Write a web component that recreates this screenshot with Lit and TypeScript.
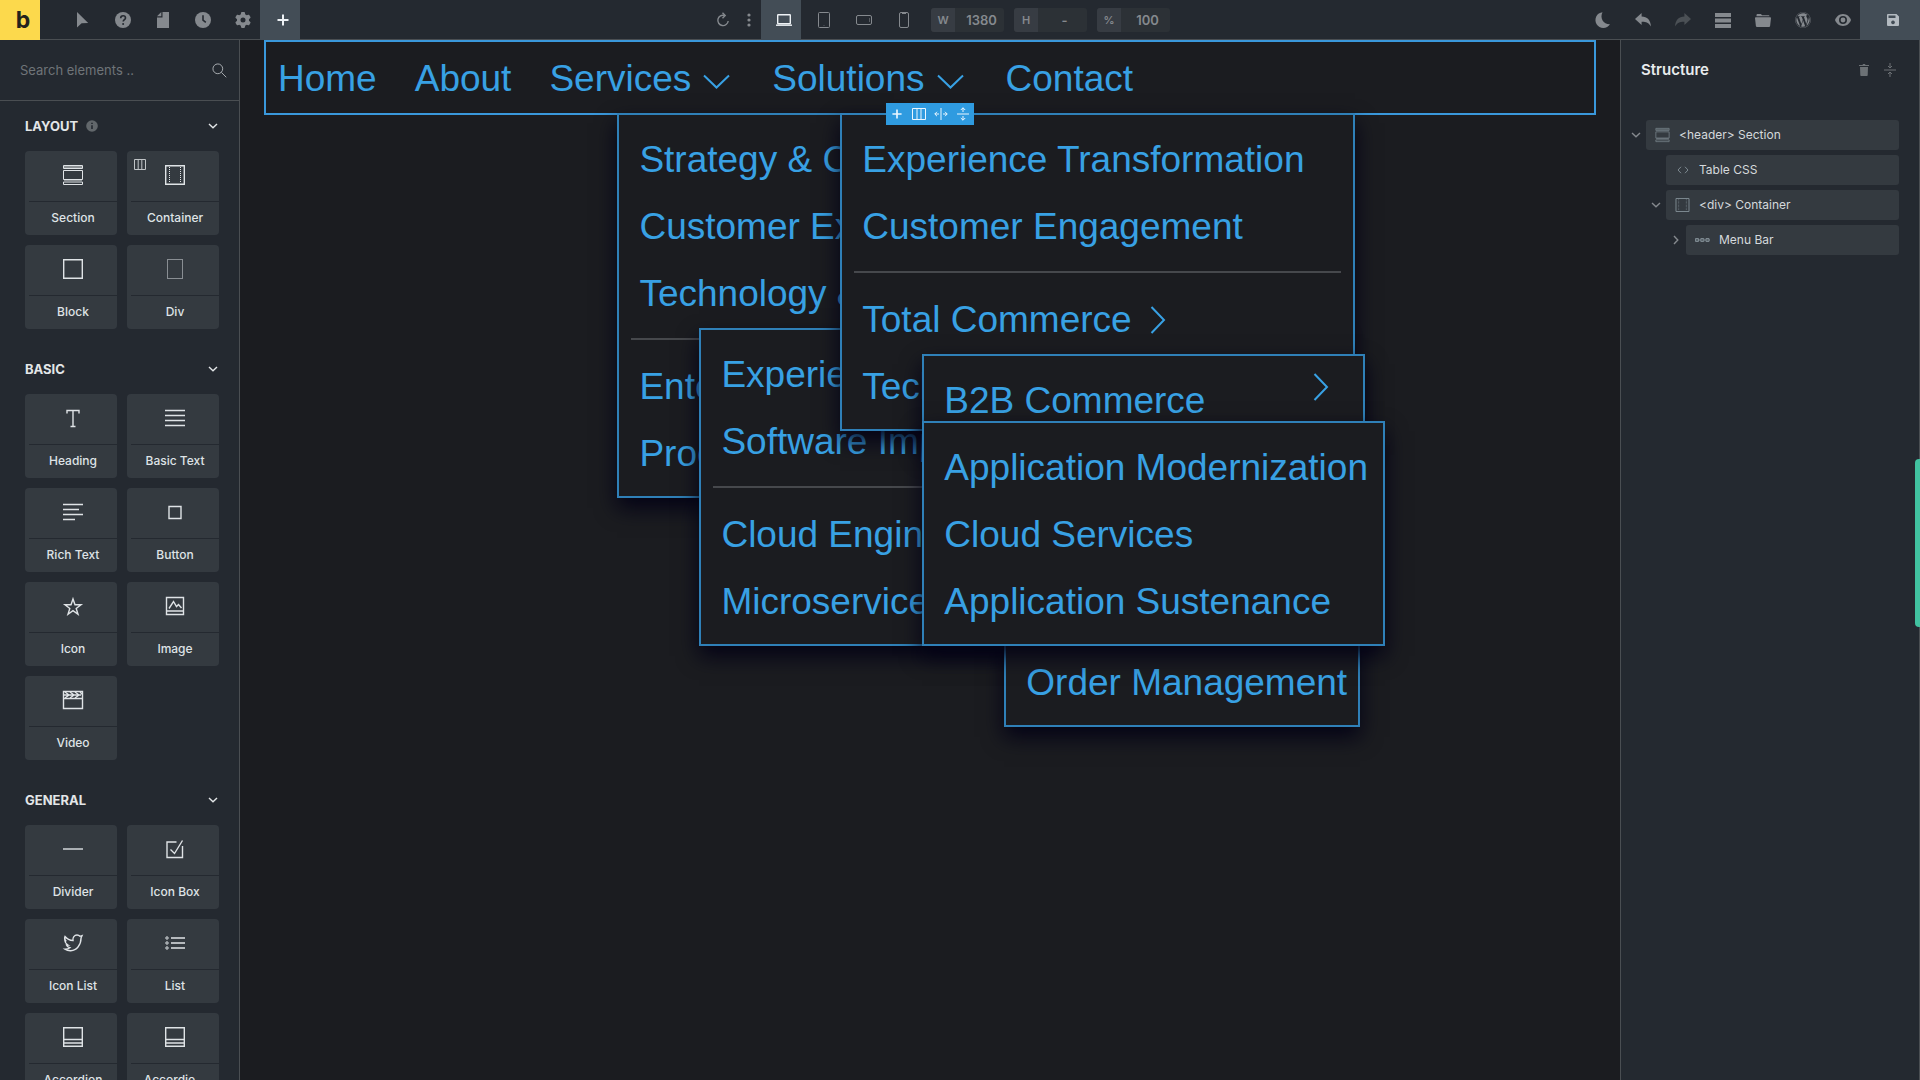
import { LitElement, html, svg, css, nothing } from "lit";
import { customElement, property } from "lit/decorators.js";
import { classMap } from "lit/directives/class-map.js";

/* Every glyph is drawn on its own viewBox: [viewBox, shapes]. */
const ICONS: Record<string, [string, any]> = {
  cursor: ["0 0 16 16", svg`<path class="f" d="M2 0v15.500l4.600-4.300 6.600-.2z"/>`],
  help: ["0 0 16 16", svg`<circle class="f" cx="8" cy="8" r="8"/><path class="cut" d="M5.700 6.200c0-1.500 1-2.400 2.400-2.400s2.400.9 2.400 2.100c0 1.700-2.300 1.800-2.300 3.600"/><circle class="cutf" cx="8.100" cy="11.900" r="1"/>`],
  page: ["0 0 16 16", svg`<path class="f" d="M7.500 0H14v16H2V5.500h5.500z"/><path class="f" d="M6.300 0v4.300H2z"/>`],
  clock: ["0 0 16 16", svg`<circle class="f" cx="8" cy="8" r="8"/><path class="cut" d="M8 3.200V8.200l2.800 2.200"/>`],
  gear: ["0 0 512 512", svg`<path class="f" d="M495.900 166.600c3.200 8.700.5 18.400-6.400 24.600l-43.300 39.400c1.100 8.300 1.700 16.800 1.700 25.400s-.6 17.100-1.700 25.400l43.300 39.400c6.900 6.200 9.600 15.900 6.400 24.600-4.400 11.900-9.700 23.300-15.800 34.300l-4.700 8.100c-6.600 11-14 21.400-22.100 31.200-5.900 7.200-15.700 9.600-24.500 6.800l-55.700-17.700c-13.400 10.300-28.200 18.900-44 25.400l-12.500 57.100c-2 9.100-9 16.300-18.200 17.800-13.800 2.300-28 3.500-42.500 3.500s-28.700-1.200-42.500-3.500c-9.200-1.500-16.200-8.700-18.200-17.800l-12.500-57.100c-15.800-6.500-30.600-15.100-44-25.400l-55.700 17.700c-8.800 2.800-18.600.3-24.500-6.800-8.100-9.800-15.500-20.200-22.100-31.200l-4.700-8.100c-6.100-11-11.400-22.400-15.800-34.300-3.200-8.700-.5-18.400 6.400-24.600l43.300-39.400c-1.100-8.300-1.700-16.800-1.700-25.400s.6-17.100 1.700-25.400L22.300 191.200c-6.900-6.200-9.600-15.900-6.400-24.600 4.400-11.900 9.700-23.300 15.800-34.300l4.700-8.100c6.600-11 14-21.400 22.100-31.200 5.900-7.200 15.700-9.600 24.500-6.800l55.700 17.700c13.400-10.300 28.200-18.900 44-25.400l12.500-57.100c2-9.100 9-16.300 18.200-17.800C227.200 1.200 241.500 0 256 0s28.700 1.200 42.500 3.500c9.200 1.500 16.200 8.700 18.200 17.800l12.500 57.100c15.800 6.500 30.600 15.100 44 25.400l55.700-17.700c8.800-2.800 18.600-.3 24.500 6.800 8.100 9.800 15.500 20.200 22.100 31.200l4.700 8.100c6.100 11 11.400 22.400 15.700 34.400zM256 336a80 80 0 1 0 0-160 80 80 0 1 0 0 160z"/>`],
  plus: ["0 0 12 12", svg`<path class="s2" d="M6 0.500v11M0.500 6h11"/>`],
  refresh: ["0 0 14 16", svg`<path class="s15" d="M8.500 3.400A5.200 5.200 0 1 0 12.200 9"/><path class="s15" d="M6.500 0.700l2.700 2.800-2.700 2.700"/>`],
  dots: ["0 0 4 14", svg`<circle class="f" cx="2" cy="2" r="1.600"/><circle class="f" cx="2" cy="7" r="1.600"/><circle class="f" cx="2" cy="12" r="1.600"/>`],
  laptop: ["0 0 16 12", svg`<rect class="s15" x="1.700" y="0.700" width="12.600" height="9" rx="0.500"/><path class="s15" d="M0 11.200h16"/>`],
  tablet: ["0 0 12 16", svg`<rect class="s1" x="0.500" y="0.500" width="11" height="15" rx="1"/><path class="s1" d="M5.500 13.500h1" opacity="0.500"/>`],
  landscape: ["0 0 16 10", svg`<rect class="s1" x="0.500" y="0.500" width="15" height="9" rx="1.500"/><path class="s1" d="M13.500 3v4" opacity="0.500"/>`],
  mobile: ["0 0 10 16", svg`<rect class="s1" x="0.500" y="0.500" width="9" height="15" rx="1.500"/><path class="s1" d="M3 1.500h4"/>`],
  moon: ["0 0 16 16", svg`<path class="f" d="M7.500 0.200A7.900 7.900 0 1 0 15 12.300 C8.500 12.500 4.500 6 7.500 0.200z"/>`],
  undo: ["0 0 16 14", svg`<path class="f" d="M6.600 0v3.500C12.300 3.500 15.500 7 16 13.500 13.500 9.500 11 8.600 6.600 8.700V12L0 6z"/>`],
  redo: ["0 0 16 14", svg`<path class="f" d="M9.400 0v3.500C3.700 3.500.5 7 0 13.500 2.500 9.500 5 8.600 9.400 8.700V12L16 6z"/>`],
  rows: ["0 0 16 15", svg`<path class="f" d="M0 0h16v4H0zM0 5.500h16v4H0zM0 11h16v4H0z"/>`],
  folder: ["0 0 16 13", svg`<path class="f" d="M1.500 2.300V1.200C1.500.5 2 0 2.600 0h3.200l1.400 1.300h6.200c.7 0 1.100.5 1.100 1zM.8 3.200h14.400c.5 0 .8.400.8.900l-.9 7.900c-.1.600-.5 1-1.100 1H2c-.6 0-1-.4-1.100-1L0 4.100c0-.5.300-.9.800-.9z"/>`],
  wp: ["0 0 512 512", svg`<path class="f" d="M61.700 169.400l101.500 278C92.200 413 43.300 340.200 43.300 256c0-30.900 6.600-60.100 18.400-86.600zm337.900 75.900c0-26.300-9.400-44.500-17.500-58.700-10.800-17.500-20.900-32.400-20.900-49.900 0-19.600 14.800-37.800 35.700-37.800.9 0 1.800.1 2.800.2-37.900-34.700-88.300-55.900-143.700-55.900-74.300 0-139.700 38.100-177.800 95.900 5 .2 9.700.3 13.700.3 22.200 0 56.700-2.700 56.700-2.700 11.500-.7 12.800 16.200 1.400 17.500 0 0-11.500 1.300-24.300 2l77.500 230.400L249.800 247l-33.100-90.800c-11.500-.7-22.300-2-22.300-2-11.500-.7-10.100-18.200 1.300-17.500 0 0 35.100 2.700 56 2.700 22.200 0 56.700-2.700 56.700-2.700 11.500-.7 12.800 16.200 1.400 17.500 0 0-11.500 1.300-24.300 2l76.900 228.700 21.200-70.900c9-29.400 16-50.500 16-68.700zm-139.900 29.300l-63.800 185.500c19.100 5.600 39.200 8.700 60.100 8.700 24.800 0 48.500-4.300 70.600-12.100-.6-.9-1.100-1.900-1.500-2.900zm183-120.700c.9 6.800 1.400 14 1.400 21.900 0 21.600-4 45.800-16.200 76.200l-65 187.900C426.200 403 468.700 334.500 468.700 256c0-37-9.400-71.800-26-102.100zM504 256c0 136.800-111.300 248-248 248C119.200 504 8 392.700 8 256 8 119.200 119.200 8 256 8c136.700 0 248 111.200 248 248zm-11.400 0c0-130.500-106.200-236.600-236.600-236.600C125.500 19.400 19.400 125.500 19.400 256S125.500 492.600 256 492.600c130.500 0 236.600-106.100 236.600-236.600z"/>`],
  eye: ["0 0 16 12", svg`<path class="f" d="M8 0C4 0 1.200 2.800 0 6c1.200 3.200 4 6 8 6s6.800-2.800 8-6C14.800 2.800 12 0 8 0z"/><circle class="cut" cx="8" cy="6" r="3.200"/>`],
  save: ["0 0 12 12", svg`<path class="f" fill-rule="evenodd" d="M1 0h8.500L12 2.500V11a1 1 0 0 1-1 1H1a1 1 0 0 1-1-1V1a1 1 0 0 1 1-1zM1.500 1.500V4h7V1.500zM6 6.500a1.900 1.900 0 1 0 .01 0z"/>`],
  search: ["0 0 16 16", svg`<circle class="s1" cx="6.200" cy="6.200" r="5.200"/><path class="s1" d="M10 10l5.200 5.200"/>`],
  down: ["0 0 10 6", svg`<path class="s15" d="M1 1l4 3.800L9 1"/>`],
  right: ["0 0 6 10", svg`<path class="s15" d="M1 1l3.800 4L1 9"/>`],
  info: ["0 0 12 12", svg`<circle class="f" cx="6" cy="6" r="5.800"/><path class="cut" d="M6 5.200V9M6 2.800v1.200"/>`],
  columns: ["0 0 12 11", svg`<path class="s1" d="M.5.5h11v10H.5zM4.200.5v10M7.800.5v10"/>`],
  section: ["0 0 20 20", svg`<path class="s1" d="M.5.500h19v3H.5zM.5 5.500h19v9H.5zM.5 17h19v2.500H.5z"/><path class="dim" d="M1 1h18v2H1zM1 14h18v2H1z"/>`],
  container: ["0 0 20 20", svg`<path class="s15" d="M.7.7h18.600v18.600H.7z"/><path class="s1 dot" d="M4.500 2v16M15.500 2v16"/>`],
  block: ["0 0 20 20", svg`<path class="s15" d="M.7.7h18.600v18.600H.7z"/>`],
  div: ["0 0 20 20", svg`<path class="s1 dot" d="M2.500 .5h15v19h-15z"/>`],
  heading: ["0 0 20 20", svg`<path class="s15" d="M4 5.500V2.500h12v3M10 2.500v16M7.500 18.500h5"/>`],
  text: ["0 0 20 20", svg`<path class="s15" d="M0 2.500h20M0 7.500h20M0 12.500h20M0 17.500h20"/>`],
  rich: ["0 0 20 20", svg`<path class="s15" d="M0 2.500h20M0 7.500h16M0 12.500h20M0 17.500h12"/>`],
  button: ["0 0 20 20", svg`<path class="s15" d="M4 4.500h12v12H4z"/>`],
  star: ["0 0 20 20", svg`<path class="s15" d="M10 3l2 5.800h6l-4.800 3.600 1.800 5.900-5-3.600-5 3.600 1.800-5.900L2 8.800h6z"/>`],
  image: ["0 0 20 20", svg`<path class="s15" d="M1.500 1.500h17v17h-17zM1.500 15h17"/><path class="s15" d="M4 12.500l4.500-7 3 5 2-2 3 3.500"/>`],
  video: ["0 0 20 20", svg`<path class="s15" d="M.5 1.500h19v17H.5zM.5 8.500h19"/><path class="s15" d="M2 2l4 3-4 3M7 2l4 3-4 3M12 2l4 3-4 3M17 2l2.500 2.500M1 5h17"/>`],
  divider: ["0 0 20 20", svg`<path class="s15" d="M0 10h20"/>`],
  iconbox: ["0 0 20 20", svg`<path class="s15" d="M11.500 3h-9.500v15.500h15.500V7M5.500 10.500l4 4 8-13"/>`],
  bird: ["0 0 20 20", svg`<path class="s15" d="M2 3.500c2 2.500 4.800 3.900 8 4C9.400 4.500 11.500 2 14 2c1.400 0 2.300.5 3 1.300l2-.6-.9 2c-.2 7.800-4.600 12.800-10.300 13-2.400.1-4.300-.5-5.800-1.500 2 0 3.600-.5 4.800-1.500-1.800-.3-2.800-1.300-3.300-2.700h1.400C3.200 11 2 9.500 1.900 7.800l1.300.5C1.700 7 1.300 5.200 2 3.500z"/>`],
  list: ["0 0 20 20", svg`<path class="s15" d="M6 5h14M6 10h14M6 15h14"/><circle class="s1" cx="2" cy="5" r="1.200"/><circle class="s1" cx="2" cy="10" r="1.200"/><circle class="s1" cx="2" cy="15" r="1.200"/>`],
  accordion: ["0 0 20 20", svg`<path class="s15" d="M.7.7h18.600v18.600H.7zM.7 12.500h18.600M.7 16h18.600"/>`],
  trash: ["0 0 10 12", svg`<path class="f" d="M1 3h8l-.3 8.200c0 .5-.3.800-.8.800H2.100c-.5 0-.8-.3-.8-.8zM0 1h3.500L4 0h2l.5 1H10v1H0z"/>`],
  collapse: ["0 0 12 14", svg`<path class="s1" d="M0 7h12M6 0v5M6 14V9M4 3l2 2 2-2M4 11l2-2 2 2"/>`],
  code: ["0 0 12 8", svg`<path class="s1" d="M4 .8L1 4l3 3.200M8 .8L11 4 8 7.200"/>`],
  menubar: ["0 0 15 4", svg`<path class="s1" d="M.5.5h3v3h-3zM5.800.5h3v3h-3zM11 .5h3v3h-3zM0 2h15"/>`],
  cols: ["0 0 14 12", svg`<path class="s1" d="M.5.5h13v11H.5zM5 .5v11M9 .5v11"/>`],
  spreadh: ["0 0 14 12", svg`<path class="s1" d="M7 0v12M5 6H.8M9 6h4.200M3 3.800L.8 6 3 8.200M11 3.800L13.200 6 11 8.200"/>`],
  spreadv: ["0 0 12 14", svg`<path class="s1" d="M0 7h12M6 5V.8M6 9v4.200M3.800 3L6 .8 8.200 3M3.800 11L6 13.200 8.200 11"/>`],
  navdown: ["0 0 27 16", svg`<path class="s2" d="M1 1.500l12.500 12 12.500-12"/>`],
  navright: ["0 0 16 28", svg`<path class="s2" d="M1.500 1l12.500 13-12.500 13"/>`],
};

@customElement("ui-icon")
class UiIcon extends LitElement {
  @property() name = "";
  @property({ type: Number }) w = 16;
  @property({ type: Number }) h = 16;
  static styles = css`
    :host { display: inline-flex; flex: none; }
    svg { display: block; overflow: visible; }
    .f { fill: currentColor; }
    .dim { fill: currentColor; opacity: 0.5; }
    .s1, .s15, .s2 { fill: none; stroke: currentColor; stroke-width: 1; }
    .s15 { stroke-width: 1.4; }
    .s2 { stroke-width: 2; }
    .dot { stroke-dasharray: 1 1; }
    .cut { fill: none; stroke: var(--cut, #242930); stroke-width: 1.6; }
    .cutf { fill: var(--cut, #242930); }
  `;
  render() {
    const [box, shapes] = ICONS[this.name];
    return html`<svg width=${this.w} height=${this.h} viewBox=${box} aria-hidden="true">${shapes}</svg>`;
  }
}

@customElement("top-bar")
class TopBar extends LitElement {
  static styles = css`
    :host { display: block; }
    .bar { display: flex; justify-content: space-between; height: 39px; background: #242930; border-bottom: 1px solid #4a4e52; color: #85898e; }
    .group { display: flex; align-items: flex-start; }
    button { font: inherit; color: inherit; background: none; border: 0; margin: 0; padding: 0 0 0 6px; width: 40px; height: 40px; display: flex; align-items: center; justify-content: center; box-sizing: border-box; }
    .logo { background: #fcd94c; color: #23221c; font: 700 23px/40px Inter, sans-serif; margin-right: 20px; }
    .on { background: #434d56; color: #eef2f5; }
    .off { color: #4b5055; }
    .slim { width: 25px; padding: 0; }
    .more { width: 26px; padding: 0 0 0 2px; }
    .save { width: 60px; background: #434d56; color: #b3bac0; --cut: #434d56; }
    .size { display: flex; width: 73px; height: 24px; margin: 8px 0 0 10px; border-radius: 3px; overflow: hidden; background: #2c3136; font: 600 13px/24px Inter, sans-serif; }
    .key { width: 24px; flex: none; background: #373c43; font-size: 11px; text-align: center; }
    .size input { min-width: 0; flex: 1; border: 0; padding: 0 0 0 4px; background: none; color: inherit; font: inherit; text-align: center; }
  `;
  private tool(name: string, label: string, w = 16, h = 16, cls = "") {
    return html`<button class=${cls} aria-label=${label}><ui-icon name=${name} .w=${w} .h=${h}></ui-icon></button>`;
  }
  private size(key: string, label: string, value: string) {
    return html`<label class="size"><span class="key">${key}</span><input aria-label=${label} .value=${value} /></label>`;
  }
  render() {
    return html`<div class="bar">
      <div class="group">
        <button class="logo" aria-label="Home">b</button>
        ${this.tool("cursor", "Select")}${this.tool("help", "Help")}${this.tool("page", "Pages")}
        ${this.tool("clock", "History")}${this.tool("gear", "Settings")}${this.tool("plus", "Elements", 12, 12, "on")}
      </div>
      <div class="group">
        ${this.tool("refresh", "Reload", 14, 16, "slim")}${this.tool("dots", "More", 4, 14, "more")}
        ${this.tool("laptop", "Desktop", 16, 12, "on")}${this.tool("tablet", "Tablet", 12, 16)}
        ${this.tool("landscape", "Mobile landscape", 16, 10)}${this.tool("mobile", "Mobile portrait", 10, 16)}
        ${this.size("W", "Width", "1380")}${this.size("H", "Height", "-")}${this.size("%", "Scale", "100")}
      </div>
      <div class="group">
        ${this.tool("moon", "Dark mode", 16, 16)}${this.tool("undo", "Undo", 16, 14)}${this.tool("redo", "Redo", 16, 14, "off")}
        ${this.tool("rows", "Structure", 16, 15)}${this.tool("folder", "Templates", 16, 13)}${this.tool("wp", "WordPress")}
        ${this.tool("eye", "Preview", 16, 12)}${this.tool("save", "Save", 12, 12, "save")}
      </div>
    </div>`;
  }
}

type Group = { title: string; info?: boolean; items: [string, string, boolean?][] };
const GROUPS: Group[] = [
  { title: "LAYOUT", info: true, items: [["section", "Section"], ["container", "Container", true], ["block", "Block"], ["div", "Div"]] },
  { title: "BASIC", items: [["heading", "Heading"], ["text", "Basic Text"], ["rich", "Rich Text"], ["button", "Button"], ["star", "Icon"], ["image", "Image"], ["video", "Video"]] },
  { title: "GENERAL", items: [["divider", "Divider"], ["iconbox", "Icon Box"], ["bird", "Icon List"], ["list", "List"], ["accordion", "Accordion"], ["accordion", "Accordio..."]] },
];

@customElement("element-panel")
class ElementPanel extends LitElement {
  static styles = css`
    :host { display: block; width: 239px; flex: none; overflow: hidden; background: #242930; border-right: 1px solid #4a4e52; font-family: Inter, sans-serif; color: #e3e6e8; }
    .search { display: flex; align-items: center; height: 60px; padding: 0 12px 0 20px; border-bottom: 1px solid #4a4e52; color: #aeb2b6; }
    .search input { flex: 1; min-width: 0; border: 0; padding: 0; background: none; color: inherit; font: 400 13px/20px Inter, sans-serif; }
    .search input::placeholder { color: #6f7478; opacity: 1; }
    .head { display: flex; align-items: center; width: 100%; height: 50px; padding: 0 21px 0 25px; gap: 8px; border: 0; background: none; color: inherit; font: 700 13px/20px Inter, sans-serif; }
    .head .info { color: #62676b; display: flex; }
    .head .end { margin-left: auto; }
    .grid { display: grid; grid-template-columns: 1fr 1fr; gap: 10px; padding: 0 20px 0 25px; margin-bottom: 15px; }
    .card { position: relative; display: flex; flex-direction: column; height: 84px; padding: 0 0 0 4px; border: 0; border-radius: 4px; background: #343a40; color: #dfe3e6; font: 500 12px/32px Inter, sans-serif; }
    .pic { display: flex; align-items: center; justify-content: center; width: 100%; height: 48px; padding-bottom: 2px; border-bottom: 1px solid #242930; }
    .label { width: 100%; text-align: center; }
    .badge { position: absolute; left: 7px; top: 8px; color: #c0c4c7; display: flex; }
  `;
  render() {
    return html`
      <label class="search"><input aria-label="Search elements" placeholder="Search elements .." /><ui-icon name="search" .w=${15} .h=${15}></ui-icon></label>
      ${GROUPS.map((g) => html`<section>
        <button class="head">${g.title}${g.info ? html`<span class="info"><ui-icon name="info" .w=${12} .h=${12}></ui-icon></span>` : nothing}<ui-icon class="end" name="down" .w=${10} .h=${6}></ui-icon></button>
        <div class="grid">${g.items.map(([icon, label, badge]) => html`<button class="card">
          ${badge ? html`<span class="badge"><ui-icon name="columns" .w=${12} .h=${11}></ui-icon></span>` : nothing}
          <span class="pic"><ui-icon name=${icon} .w=${20} .h=${20}></ui-icon></span><span class="label">${label}</span>
        </button>`)}</div>
      </section>`)}`;
  }
}

const TREE = [
  { depth: 0, toggle: "down", icon: "section", w: 15, h: 14, label: "<header> Section" },
  { depth: 1, toggle: "", icon: "code", w: 12, h: 8, label: "Table CSS" },
  { depth: 1, toggle: "down", icon: "container", w: 15, h: 14, label: "<div> Container" },
  { depth: 2, toggle: "right", icon: "menubar", w: 15, h: 4, label: "Menu Bar" },
];

@customElement("structure-panel")
class StructurePanel extends LitElement {
  static styles = css`
    :host { display: block; position: relative; width: 298px; flex: none; background: #242930; border: 1px solid #4a4e52; border-width: 0 1px; font-family: Inter, sans-serif; color: #d5d9dc; }
    header { display: flex; align-items: center; height: 60px; padding: 0 23px 0 20px; gap: 15px; color: #6c7175; }
    h2 { flex: 1; margin: 0; font: 600 15px/20px Inter, sans-serif; color: #e8ebed; }
    header button, .toggle { display: flex; align-items: center; justify-content: center; border: 0; padding: 0; background: none; color: inherit; }
    ul { list-style: none; margin: 20px 20px 0 5px; padding: 0; display: grid; gap: 5px; }
    li { display: flex; align-items: center; }
    .d1 { padding-left: 20px; }
    .d2 { padding-left: 40px; }
    .toggle { width: 20px; height: 30px; flex: none; color: #85898e; }
    .node { flex: 1; display: flex; align-items: center; gap: 9px; height: 30px; padding: 0 9px; border: 0; border-radius: 3px; background: #343a40; color: inherit; font: 400 12px/20px Inter, sans-serif; text-align: left; }
    .node ui-icon { color: #7d8990; width: 15px; justify-content: center; }
    .tab { position: absolute; right: -1px; top: 419px; width: 5px; height: 168px; border-radius: 4px 0 0 4px; background: #41c2a0; }
  `;
  render() {
    return html`
      <header><h2>Structure</h2>
        <button aria-label="Delete"><ui-icon name="trash" .w=${10} .h=${12}></ui-icon></button>
        <button aria-label="Collapse all"><ui-icon name="collapse" .w=${12} .h=${14}></ui-icon></button>
      </header>
      <ul>${TREE.map((n) => html`<li class="d${n.depth}">
        ${n.toggle ? html`<button class="toggle" aria-label="Toggle"><ui-icon name=${n.toggle} .w=${n.toggle === "down" ? 10 : 6} .h=${n.toggle === "down" ? 6 : 10}></ui-icon></button>` : html`<span class="toggle"></span>`}
        <button class="node"><ui-icon name=${n.icon} .w=${n.w} .h=${n.h}></ui-icon>${n.label}</button>
      </li>`)}</ul>
      <span class="tab"></span>`;
  }
}

type Entry = { label?: string; rule?: boolean; far?: boolean; arrow?: boolean; sub?: Menu };
type Menu = { width?: number; height?: number; end?: boolean; items: Entry[] };

const SERVICES: Menu = {
  items: [
    { label: "Strategy & C" },
    { label: "Customer Exp" },
    {
      label: "Technology &",
      sub: {
        width: 640,
        items: [{ label: "Experience" }, { label: "Software Imp" }, { rule: true }, { label: "Cloud Engine" }, { label: "Microservices" }],
      },
    },
    { rule: true },
    { label: "Ente" },
    { label: "Prod" },
  ],
};
const SOLUTIONS: Menu = {
  width: 515,
  items: [
    { label: "Experience Transformation" },
    { label: "Customer Engagement" },
    { rule: true },
    {
      label: "Total Commerce",
      arrow: true,
      sub: { width: 443, items: [{ label: "B2B Commerce", sub: { width: 356, height: 292, end: true, items: [{ label: "Order Management" }] } }] },
    },
    {
      label: "Tech",
      arrow: true,
      far: true,
      sub: { width: 463, items: [{ label: "Application Modernization" }, { label: "Cloud Services" }, { label: "Application Sustenance" }] },
    },
  ],
};
const NAV: { label: string; sub?: Menu }[] = [
  { label: "Home" }, { label: "About" }, { label: "Services", sub: SERVICES }, { label: "Solutions", sub: SOLUTIONS }, { label: "Contact" },
];

@customElement("site-canvas")
class SiteCanvas extends LitElement {
  static styles = css`
    :host { display: block; flex: 1; min-width: 0; padding: 0 24px; background: #1b1c20; font: 400 37px/67px "Liberation Sans", Arial, sans-serif; color: #38a1e4; }
    ul { list-style: none; margin: 0; padding: 0; }
    a { color: inherit; text-decoration: none; white-space: nowrap; }
    nav { position: relative; box-sizing: border-box; height: 75px; border: 2px solid #3a98db; padding: 1px 0 0 12px; }
    .top { display: flex; gap: 38px; }
    .top > li { position: relative; display: flex; align-items: center; height: 70px; }
    .top > .has { padding-right: 4px; }
    .top > li > a { display: flex; align-items: center; gap: 12px; }
    .top > li > a > ui-icon { padding-top: 8px; }
    .menu { position: absolute; z-index: 1; left: 68px; top: 100%; margin-top: 2px; box-sizing: border-box; padding: 10px 12px; border: 2px solid #2f80b8; background: #1b1c20; box-shadow: 0 10px 20px #040316; }
    .top > li > .menu { margin-top: 0; }
    .end { display: flex; flex-direction: column; justify-content: flex-end; }
    .menu li { height: 67px; }
    .menu .has { position: relative; }
    .menu li > a { display: flex; align-items: center; gap: 18px; box-sizing: border-box; height: 67px; padding: 2px 6px 0 8px; }
    .menu ui-icon { position: relative; z-index: 1; }
    .menu li > .far { justify-content: space-between; padding-right: 12px; }
    .menu .rule { height: 2px; margin: 12px 0; background: #46484c; }
    .tools { position: absolute; z-index: 2; left: 50%; top: 100%; width: 88px; height: 22px; margin: -10px 0 0 -44px; display: grid; grid-template-columns: repeat(4, 1fr); background: #2f9be0; color: #eaf6ff; }
    .tools button { display: flex; align-items: center; justify-content: center; padding: 0; border: 0; background: none; color: inherit; }
  `;
  private menu(m: Menu): any {
    const size = `${m.width ? `width:${m.width}px;` : ""}${m.height ? `height:${m.height}px` : ""}`;
    return html`<ul class=${classMap({ menu: true, end: !!m.end })} style=${size}>
      ${m.items.map((e) => e.rule
        ? html`<li class="rule" role="separator"></li>`
        : html`<li class=${e.sub ? "has" : ""}><a href="#" class=${e.far ? "far" : ""}>${e.label}${e.arrow ? html`<ui-icon name="navright" .w=${16} .h=${28}></ui-icon>` : nothing}</a>${e.sub ? this.menu(e.sub) : nothing}</li>`)}
    </ul>`;
  }
  render() {
    return html`<nav>
      <ul class="top">${NAV.map((n) => html`<li class=${n.sub ? "has" : ""}><a href="#">${n.label}${n.sub ? html`<ui-icon name="navdown" .w=${27} .h=${16}></ui-icon>` : nothing}</a>${n.sub ? this.menu(n.sub) : nothing}</li>`)}</ul>
      <div class="tools">
        <button aria-label="Add"><ui-icon name="plus" .w=${10} .h=${10}></ui-icon></button>
        <button aria-label="Columns"><ui-icon name="cols" .w=${14} .h=${12}></ui-icon></button>
        <button aria-label="Spread horizontally"><ui-icon name="spreadh" .w=${14} .h=${12}></ui-icon></button>
        <button aria-label="Spread vertically"><ui-icon name="spreadv" .w=${12} .h=${14}></ui-icon></button>
      </div>
    </nav>`;
  }
}

@customElement("app-root")
class AppRoot extends LitElement {
  static styles = css`
    :host { display: flex; flex-direction: column; height: 100vh; overflow: hidden; background: #1b1c20; }
    .body { display: flex; flex: 1; min-height: 0; }
  `;
  render() {
    return html`<top-bar></top-bar><div class="body"><element-panel></element-panel><site-canvas></site-canvas><structure-panel></structure-panel></div>`;
  }
}
